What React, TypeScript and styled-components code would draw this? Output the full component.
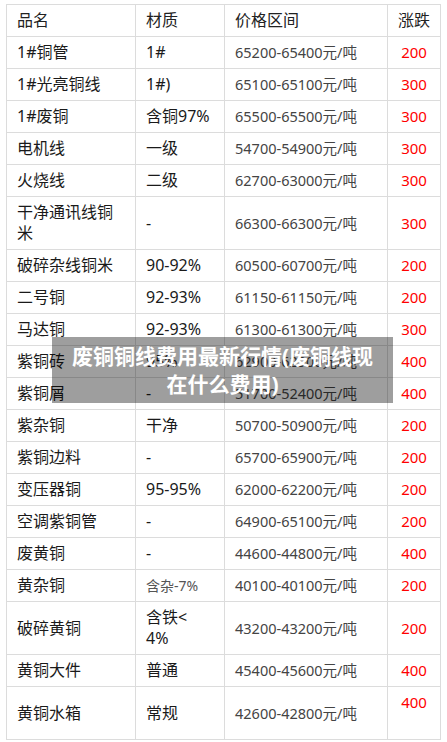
import * as React from 'react';
import styled, { createGlobalStyle } from 'styled-components';

const GlobalStyle = createGlobalStyle`
  html, body {
    margin: 0;
    padding: 0;
    background: #fff;
  }
  body {
    font-family: "Noto Sans", "Noto Sans CJK SC", sans-serif;
  }
`;

const Page = styled.div`
  position: relative;
  width: 447px;
  padding: 4px 0 0 6px;
  box-sizing: border-box;
`;

const PriceTable = styled.table`
  width: 435px;
  border-collapse: collapse;
  table-layout: fixed;
`;

const HeadCell = styled.th<{ $center?: boolean }>`
  border: 1px solid #dcdcdc;
  padding: 5px 10px;
  font-size: 16px;
  line-height: 21px;
  font-weight: normal;
  color: #222;
  text-align: ${(p) => (p.$center ? 'center' : 'left')};
  vertical-align: middle;
`;

const Cell = styled.td<{ $small?: boolean }>`
  border: 1px solid #dcdcdc;
  padding: 5px 10px;
  font-size: ${(p) => (p.$small ? '14px' : '16px')};
  line-height: 21px;
  color: ${(p) => (p.$small ? '#555' : '#1a1a1a')};
  white-space: pre-line;
  vertical-align: middle;
  overflow: hidden;
`;

const PriceCell = styled(Cell)`
  font-size: 14.5px;
  color: #444;
  white-space: nowrap;
`;

const ChangeCell = styled(Cell)`
  font-size: 15px;
  color: #ff0000;
  text-align: center;
  padding: 5px 0;
`;

const Banner = styled.div`
  position: absolute;
  left: 52px;
  top: 337px;
  width: 341px;
  height: 66px;
  background: rgba(0, 0, 0, 0.38);
  color: #fff;
  font-size: 21px;
  font-weight: bold;
  line-height: 28px;
  text-align: center;
  display: flex;
  align-items: center;
  justify-content: center;
  padding: 0 10px;
  box-sizing: border-box;
`;

type Row = {
  name: string;
  material: string;
  price: string;
  change: string;
  smallMaterial?: boolean;
};

const rows: Row[] = [
  { name: '1#铜管', material: '1#', price: '65200-65400元/吨', change: '200' },
  { name: '1#光亮铜线', material: '1#)', price: '65100-65100元/吨', change: '300' },
  { name: '1#废铜', material: '含铜97%', price: '65500-65500元/吨', change: '300' },
  { name: '电机线', material: '一级', price: '54700-54900元/吨', change: '300' },
  { name: '火烧线', material: '二级', price: '62700-63000元/吨', change: '300' },
  { name: '干净通讯线铜\n米', material: '-', price: '66300-66300元/吨', change: '300' },
  { name: '破碎杂线铜米', material: '90-92%', price: '60500-60700元/吨', change: '200' },
  { name: '二号铜', material: '92-93%', price: '61150-61150元/吨', change: '200' },
  { name: '马达铜', material: '92-93%', price: '61300-61300元/吨', change: '300' },
  { name: '紫铜砖', material: '95%', price: '62900-62900元/吨', change: '400' },
  { name: '紫铜屑', material: '-', price: '51700-52400元/吨', change: '400' },
  { name: '紫杂铜', material: '干净', price: '50700-50900元/吨', change: '200' },
  { name: '紫铜边料', material: '-', price: '65700-65900元/吨', change: '200' },
  { name: '变压器铜', material: '95-95%', price: '62000-62200元/吨', change: '200' },
  { name: '空调紫铜管', material: '-', price: '64900-65100元/吨', change: '200' },
  { name: '废黄铜', material: '-', price: '44600-44800元/吨', change: '400' },
  { name: '黄杂铜', material: '含杂-7%', price: '40100-40100元/吨', change: '200', smallMaterial: true },
  { name: '破碎黄铜', material: '含铁<\n4%', price: '43200-43200元/吨', change: '200' },
  { name: '黄铜大件', material: '普通', price: '45400-45600元/吨', change: '400' },
  { name: '黄铜水箱', material: '常规', price: '42600-42800元/吨', change: '400\n\u00a0' },
];

export default function App() {
  return (
    <Page>
      <GlobalStyle />
      <PriceTable>
        <colgroup>
          <col style={{ width: 129 }} />
          <col style={{ width: 89 }} />
          <col style={{ width: 163 }} />
          <col style={{ width: 53 }} />
        </colgroup>
        <thead>
          <tr>
            <HeadCell>品名</HeadCell>
            <HeadCell>材质</HeadCell>
            <HeadCell>价格区间</HeadCell>
            <HeadCell $center>涨跌</HeadCell>
          </tr>
        </thead>
        <tbody>
          {rows.map((r) => (
            <tr key={r.name}>
              <Cell>{r.name}</Cell>
              <Cell $small={r.smallMaterial}>{r.material}</Cell>
              <PriceCell>{r.price}</PriceCell>
              <ChangeCell>{r.change}</ChangeCell>
            </tr>
          ))}
        </tbody>
      </PriceTable>
      <Banner>废铜铜线费用最新行情(废铜线现在什么费用)</Banner>
    </Page>
  );
}
